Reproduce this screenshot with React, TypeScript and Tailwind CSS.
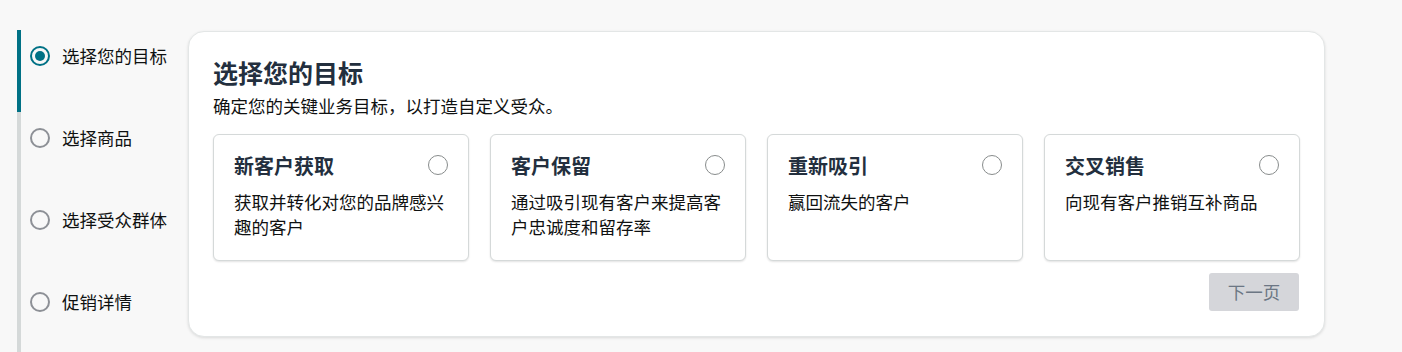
import React from 'react'

const FONT = { fontFamily: '"Noto Sans CJK SC", "Noto Sans", sans-serif' }

const STEPS = ['选择您的目标', '选择商品', '选择受众群体', '促销详情']

const GOALS = [
  { title: '新客户获取', desc: '获取并转化对您的品牌感兴趣的客户' },
  { title: '客户保留', desc: '通过吸引现有客户来提高客户忠诚度和留存率' },
  { title: '重新吸引', desc: '赢回流失的客户' },
  { title: '交叉销售', desc: '向现有客户推销互补商品' }
]

function StepDot({ active }: { active: boolean }): React.JSX.Element {
  return active ? (
    <span className="flex h-[20px] w-[20px] shrink-0 items-center justify-center rounded-full border-[2.5px] border-[#007185]">
      <span className="h-[10px] w-[10px] rounded-full bg-[#007185]" />
    </span>
  ) : (
    <span className="h-[20px] w-[20px] shrink-0 rounded-full border-2 border-[#8d9096]" />
  )
}

export default function App(): React.JSX.Element {
  return (
    <div className="flex h-[352px] w-[1402px] overflow-hidden bg-[#f8f8f8] text-[#0f1111]" style={FONT}>
      <nav className="ml-[17px] mt-[30px] flex w-[171px] shrink-0">
        <div className="flex w-1 shrink-0 flex-col">
          <div className="h-[82px] shrink-0 bg-[#007185]" />
          <div className="flex-1 bg-[#d5d9d9]" />
        </div>
        <ul className="flex flex-col">
          {STEPS.map((s, i) => (
            <li key={s} className="flex h-[82px] shrink-0 items-start gap-[12px] pl-[9px] pt-[16px]">
              <StepDot active={i === 0} />
              <span className="-mt-[2px] whitespace-nowrap text-[17.5px] leading-[24px] text-[#0f1111]">{s}</span>
            </li>
          ))}
        </ul>
      </nav>

      <main className="mt-[31px] h-[306px] w-[1137px] shrink-0 rounded-2xl border border-[#e3e6e6] bg-white px-6 pt-[23px] shadow-[0_1px_3px_rgba(0,0,0,0.12)]">
        <h1 className="text-[25px] font-bold leading-[34px] text-[#232f3e]">选择您的目标</h1>
        <p className="mt-[5px] text-[17.5px] leading-[24px] text-[#0f1111]">
          确定您的关键业务目标，以打造自定义受众。
        </p>
        <div className="mt-[16px] grid grid-cols-4 gap-[21px]">
          {GOALS.map((g) => (
            <div
              key={g.title}
              className="h-[127px] rounded-[6px] border border-[#d5d9d9] bg-white px-[20px] pt-[17px] shadow-[0_1px_2px_rgba(15,17,17,0.12)]"
            >
              <div className="flex items-start justify-between">
                <h2 className="text-[20px] font-bold leading-[28px] text-[#232f3e]">{g.title}</h2>
                <span className="mt-[3px] h-[20px] w-[20px] shrink-0 rounded-full border border-[#888c8c]" />
              </div>
              <p className="mt-[9px] text-[17.5px] leading-[25px]">{g.desc}</p>
            </div>
          ))}
        </div>
        <div className="mt-3 flex justify-end pr-[1px]">
          <button className="h-[38px] w-[90px] rounded-[3px] bg-[#d5d6da] text-[17.5px] text-[#6c7684]">
            下一页
          </button>
        </div>
      </main>
    </div>
  )
}
